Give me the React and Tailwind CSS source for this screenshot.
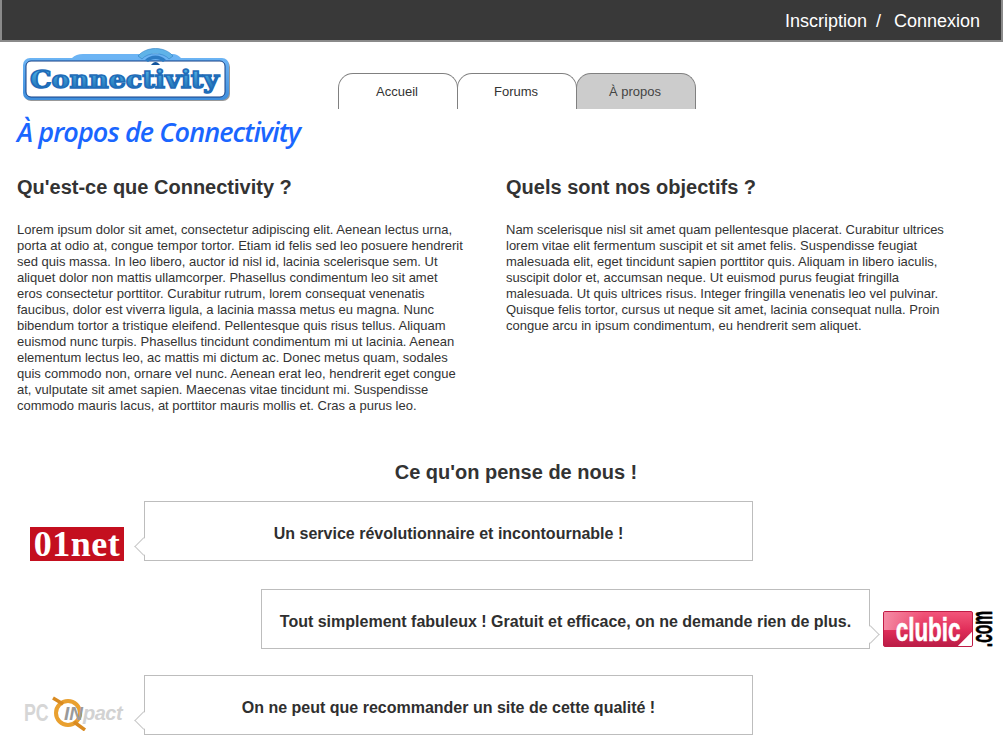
const Logo = () => (
  <svg width="210" height="56" viewBox="0 0 210 56" className="block">
    <defs>
      <linearGradient id="tg" x1="0" y1="0" x2="0" y2="1">
        <stop offset="0" stopColor="#5cc0ee" />
        <stop offset="1" stopColor="#1463ad" />
      </linearGradient>
      <linearGradient id="fr" x1="0" y1="0" x2="0" y2="1">
        <stop offset="0" stopColor="#6cb4f4" />
        <stop offset="1" stopColor="#3f8edc" />
      </linearGradient>
    </defs>
    <path d="M49 10 Q53 6 60 6 L150 6 Q154 6 158 10Z" fill="#6cb4f4" />
    <rect x="1" y="12" width="206" height="41" rx="7" fill="#555" opacity="0.6" />
    <rect x="0" y="10" width="206" height="42" rx="7" fill="url(#fr)" />
    <rect x="3" y="13" width="199" height="36" rx="5" fill="#fff" stroke="#123f86" strokeWidth="1" />
    <path d="M115 8 C123 -2 142 -2 150 8 L146 11 C140 4 125 4 119 11Z" fill="#5fb3e8" stroke="#2f7fc4" strokeWidth="0.6" />
    <path d="M122 12 C127 6 138 6 143 12 L140 14 C136 10 129 10 125 14Z" fill="#2c7cc4" />
    <path d="M128 17 C131 13 134 13 137 17Z" fill="#14549c" />
    <text x="7" y="40" fontFamily="'DejaVu Serif', serif" fontWeight="700" fontSize="24" textLength="189" lengthAdjust="spacingAndGlyphs" fill="url(#tg)" stroke="#1f6cb8" strokeWidth="1.6">Connectivity</text>
  </svg>
);

const Net01 = () => (
  <div className="w-[94px] h-[34px] bg-[#c40f1f] flex items-center justify-center text-white text-[36px] font-bold leading-none tracking-[0.5px] font-['Liberation_Serif',serif]">
    01net
  </div>
);

const Clubic = () => (
  <div className="flex items-center h-[37px]">
    <div className="relative w-[90px] h-[36px] rounded-[2px] border border-[#c01c46] bg-gradient-to-b from-[#f2557a] via-[#e22f5b] to-[#bb1d47] flex items-center justify-center overflow-hidden">
      <div className="absolute left-0 top-0 w-[40px] h-[18px] bg-gradient-to-r from-[#f58aa4] to-transparent" />
      <span className="relative text-white text-[34px] font-bold leading-none scale-x-[0.66] [-webkit-text-stroke:0.6px_white] font-['Liberation_Sans',sans-serif]">clubic</span>
      <div className="absolute right-[-10px] bottom-[-10px] w-[20px] h-[20px] rotate-45 bg-white" />
    </div>
    <div className="w-[18px] h-[37px] flex items-center justify-center">
      <span className="block -rotate-90 whitespace-nowrap text-black text-[30px] font-bold leading-none scale-x-[0.52] [-webkit-text-stroke:0.6px_black] font-['Liberation_Sans',sans-serif]">.com</span>
    </div>
  </div>
);

const PcInpact = () => (
  <div className="relative w-[102px] h-[36px] flex items-center font-['Liberation_Sans',sans-serif] font-bold leading-none whitespace-nowrap">
    <svg width="102" height="36" viewBox="0 0 102 36" className="absolute left-0 top-0">
      <circle cx="45" cy="18" r="12" fill="none" stroke="#e9a02f" strokeWidth="4" />
      <path d="M30 3 L40 9 M51 27 L62 35" stroke="#d98a20" strokeWidth="3.5" />
    </svg>
    <span className="relative w-[25px] ml-[1px] text-[24px] text-[#d6d6d6] origin-left scale-x-[0.74]">PC</span>
    <span className="relative ml-[15px] text-[19px] italic text-[#9a9a9a]">IN</span>
    <span className="relative text-[20px] italic text-[#d2d2d2] tracking-[-0.5px]">pact</span>
  </div>
);

const Bubble = ({ children, side = "left" }) => (
  <div className="relative w-[609px] h-[60px] pt-[5px] bg-white border border-[#bdbdbd] flex items-center justify-center text-[16px] font-bold text-[#2f2f2f]">
    {side === "left" ? (
      <div className="absolute left-[-8px] top-[38px] w-[13px] h-[13px] rotate-45 bg-white border-l border-b border-[#c8c8c8]" />
    ) : (
      <div className="absolute right-[-8px] top-[38px] w-[13px] h-[13px] rotate-45 bg-white border-r border-t border-[#c8c8c8]" />
    )}
    <span className="relative">{children}</span>
  </div>
);

const Tab = ({ children, active }) => (
  <a className={`w-[120px] h-[36px] -mr-px pr-[2px] flex items-center justify-center text-[13px] rounded-t-[15px] border border-b-0 border-[#808080] ${active ? "bg-[#cccccc] text-[#444]" : "bg-white text-[#333]"}`}>
    {children}
  </a>
);

export default function App() {
  return (
    <div className="w-[1003px] h-[735px] overflow-hidden bg-white text-[#333] font-['Liberation_Sans',Arial,sans-serif]">
      <header className="h-[42px] pt-[2px] bg-[#393939] border-x-2 border-b-2 border-[#8a8a8a] flex items-center justify-end pr-[21px] text-[18px] text-white">
        <a>Inscription</a>
        <span className="ml-[9px] mr-[13px]">/</span>
        <a>Connexion</a>
      </header>

      <div className="flex h-[67px]">
        <div className="ml-[23px] mt-[6px]"><Logo /></div>
        <nav className="ml-[105px] mt-[31px] flex">
          <Tab>Accueil</Tab>
          <Tab>Forums</Tab>
          <Tab active>À propos</Tab>
        </nav>
      </div>

      <h1 className="ml-[17px] h-[48px] text-[27px] leading-[46px] italic font-semibold text-[#1a66ff] tracking-[-0.9px] font-['Open_Sans',sans-serif]">
        À propos de Connectivity
      </h1>

      <div className="flex pl-[17px] h-[303px]">
        <section className="w-[489px]">
          <h2 className="mt-[18px] text-[20px] leading-[24px] font-bold">Qu'est-ce que Connectivity ?</h2>
          <p className="mt-[23px] w-[448px] text-[13px] leading-[16px]">
            Lorem ipsum dolor sit amet, consectetur adipiscing elit. Aenean lectus urna, porta at odio at, congue tempor tortor. Etiam id felis sed leo posuere hendrerit sed quis massa. In leo libero, auctor id nisl id, lacinia scelerisque sem. Ut aliquet dolor non mattis ullamcorper. Phasellus condimentum leo sit amet eros consectetur porttitor. Curabitur rutrum, lorem consequat venenatis faucibus, dolor est viverra ligula, a lacinia massa metus eu magna. Nunc bibendum tortor a tristique eleifend. Pellentesque quis risus tellus. Aliquam euismod nunc turpis. Phasellus tincidunt condimentum mi ut lacinia. Aenean elementum lectus leo, ac mattis mi dictum ac. Donec metus quam, sodales quis commodo non, ornare vel nunc. Aenean erat leo, hendrerit eget congue at, vulputate sit amet sapien. Maecenas vitae tincidunt mi. Suspendisse commodo mauris lacus, at porttitor mauris mollis et. Cras a purus leo.
          </p>
        </section>
        <section className="w-[450px]">
          <h2 className="mt-[18px] text-[20px] leading-[24px] font-bold">Quels sont nos objectifs ?</h2>
          <p className="mt-[23px] w-[445px] text-[13px] leading-[16px]">
            Nam scelerisque nisl sit amet quam pellentesque placerat. Curabitur ultrices lorem vitae elit fermentum suscipit et sit amet felis. Suspendisse feugiat malesuada elit, eget tincidunt sapien porttitor quis. Aliquam in libero iaculis, suscipit dolor et, accumsan neque. Ut euismod purus feugiat fringilla malesuada. Ut quis ultrices risus. Integer fringilla venenatis leo vel pulvinar. Quisque felis tortor, cursus ut neque sit amet, lacinia consequat nulla. Proin congue arcu in ipsum condimentum, eu hendrerit sem aliquet.
          </p>
        </section>
      </div>

      <h2 className="w-[1032px] text-center text-[20px] leading-[24px] font-bold">Ce qu'on pense de nous !</h2>

      <div className="mt-[17px] flex flex-col gap-[28px]">
        <div className="flex items-end">
          <div className="ml-[30px] w-[114px]"><Net01 /></div>
          <Bubble>Un service révolutionnaire et incontournable !</Bubble>
        </div>
        <div className="flex items-end">
          <div className="ml-[261px]"><Bubble side="right">Tout simplement fabuleux ! Gratuit et efficace, on ne demande rien de plus.</Bubble></div>
          <div className="ml-[13px] mb-[2px]"><Clubic /></div>
        </div>
        <div className="flex items-end -mt-[2px]">
          <div className="ml-[23px] w-[121px] mb-[4px]"><PcInpact /></div>
          <Bubble>On ne peut que recommander un site de cette qualité !</Bubble>
        </div>
      </div>
    </div>
  );
}
